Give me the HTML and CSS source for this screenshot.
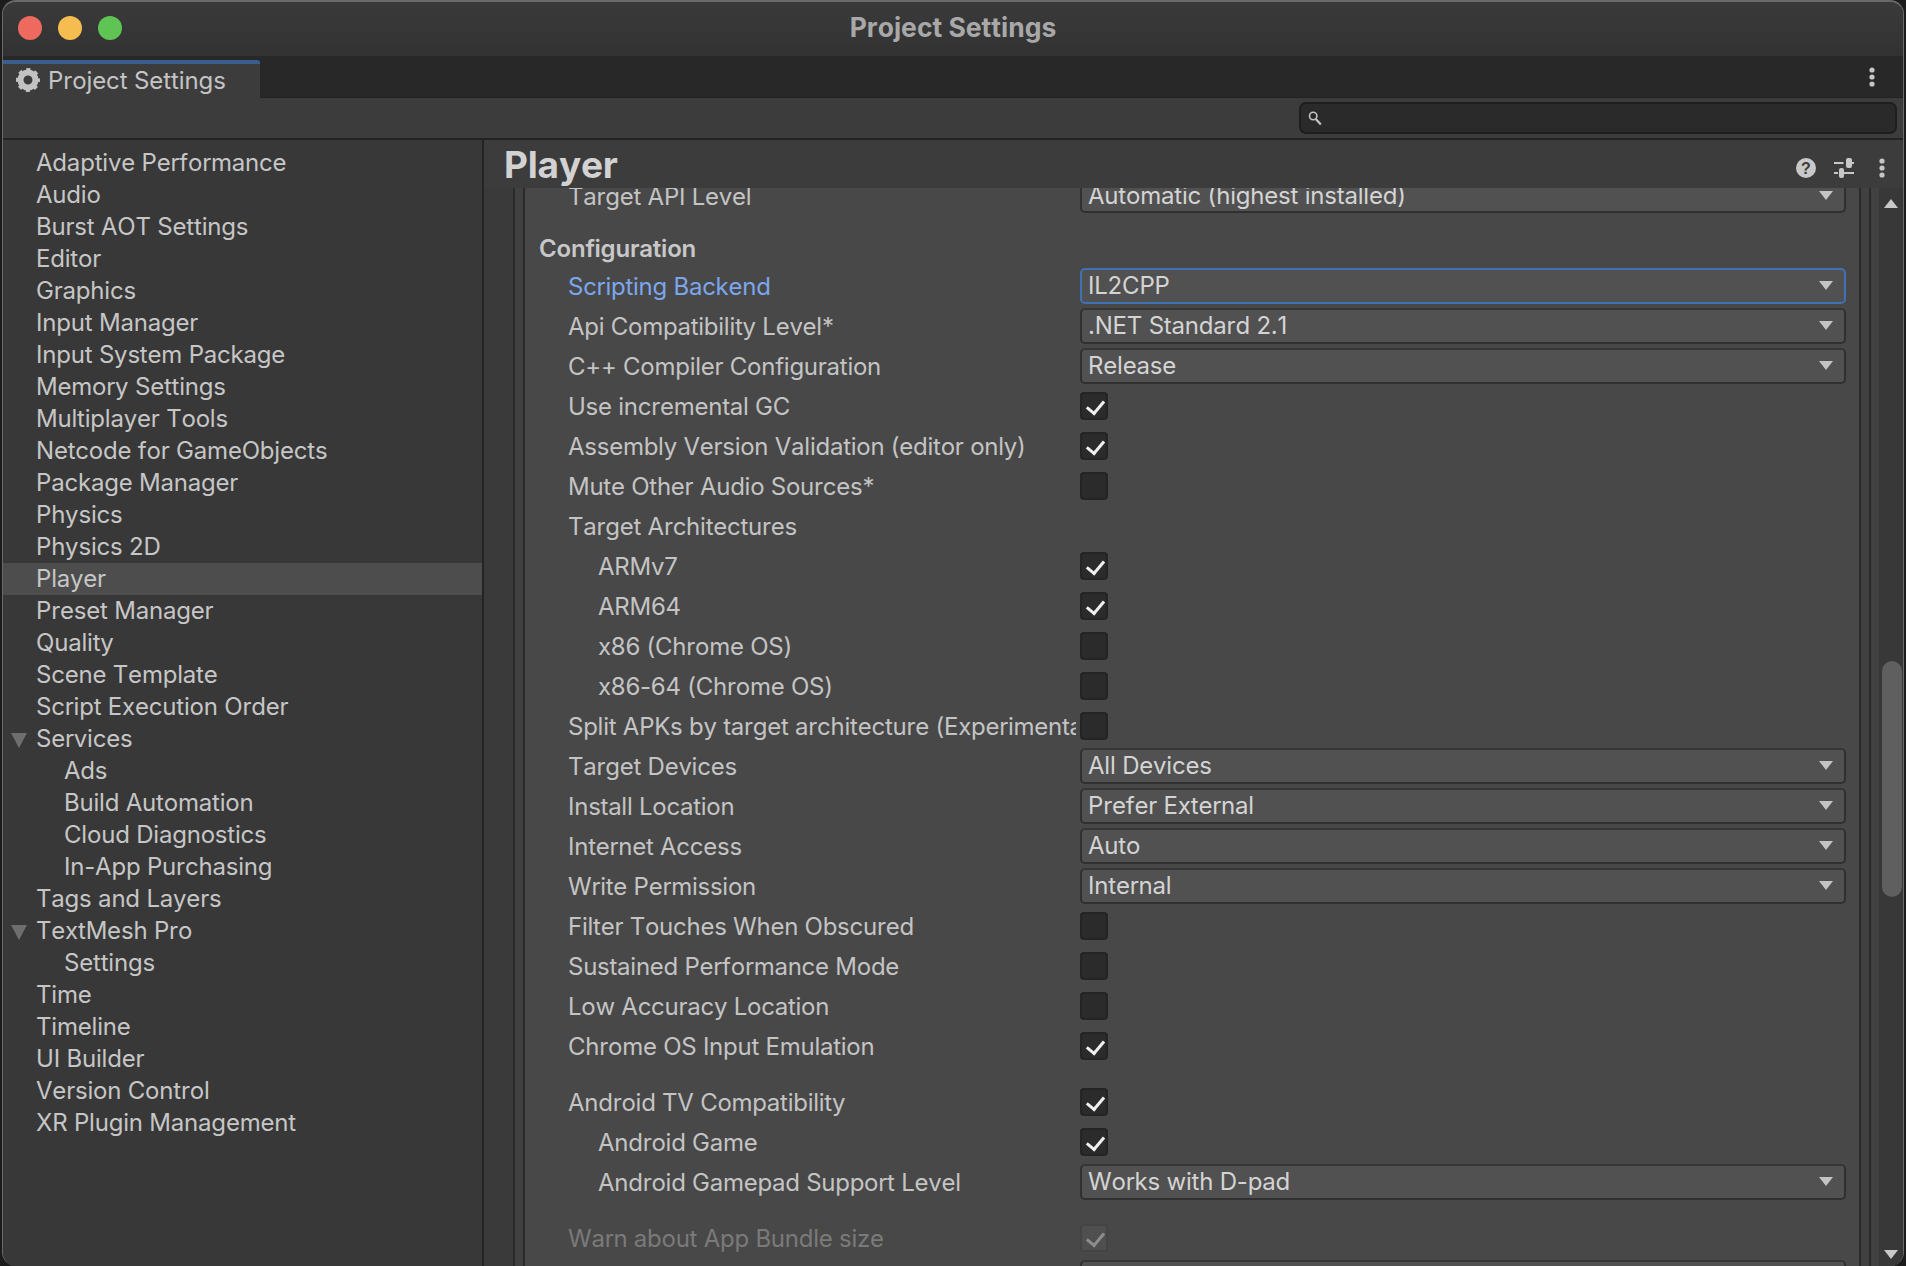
FILE: index.html
```html
<!DOCTYPE html>
<html lang="en">
<head>
<meta charset="utf-8">
<title>Project Settings</title>
<link rel="stylesheet" href="styles.css">
</head>
<body>
<div class="window">
  <header class="titlebar">
    <div class="lights"><span class="light red"></span><span class="light yellow"></span><span class="light green"></span></div>
    <div class="title">Project Settings</div>
  </header>
  <div class="tabbar">
    <div class="tab">
      <svg class="gear" viewBox="0 0 24 24"><circle cx="12" cy="12" r="7.500" fill="none" stroke="#c2c2c2" stroke-width="6"/><circle cx="12" cy="12" r="10.300" fill="none" stroke="#c2c2c2" stroke-width="3.400" stroke-dasharray="4 4.090" stroke-dashoffset="2"/></svg>
      <span>Project Settings</span>
    </div>
    <svg class="kebab" viewBox="0 0 6 20"><circle cx="3" cy="3" r="2.600"/><circle cx="3" cy="10" r="2.600"/><circle cx="3" cy="17" r="2.600"/></svg>
  </div>
  <div class="toolbar">
    <div class="search">
      <svg class="search-icon" viewBox="0 0 14 14"><circle cx="5.200" cy="5" r="3.700" fill="none" stroke="#c4c4c4" stroke-width="1.600"/><path d="M7.800 8l5 5.500" stroke="#c4c4c4" stroke-width="2.200" fill="none"/></svg>
    </div>
  </div>
  <div class="body">
    <nav class="sidebar">
      <div class="item">Adaptive Performance</div>
      <div class="item">Audio</div>
      <div class="item">Burst AOT Settings</div>
      <div class="item">Editor</div>
      <div class="item">Graphics</div>
      <div class="item">Input Manager</div>
      <div class="item">Input System Package</div>
      <div class="item">Memory Settings</div>
      <div class="item">Multiplayer Tools</div>
      <div class="item">Netcode for GameObjects</div>
      <div class="item">Package Manager</div>
      <div class="item">Physics</div>
      <div class="item">Physics 2D</div>
      <div class="item selected">Player</div>
      <div class="item">Preset Manager</div>
      <div class="item">Quality</div>
      <div class="item">Scene Template</div>
      <div class="item">Script Execution Order</div>
      <div class="item parent"><span class="fold"></span>Services</div>
      <div class="item child">Ads</div>
      <div class="item child">Build Automation</div>
      <div class="item child">Cloud Diagnostics</div>
      <div class="item child">In-App Purchasing</div>
      <div class="item">Tags and Layers</div>
      <div class="item parent"><span class="fold"></span>TextMesh Pro</div>
      <div class="item child">Settings</div>
      <div class="item">Time</div>
      <div class="item">Timeline</div>
      <div class="item">UI Builder</div>
      <div class="item">Version Control</div>
      <div class="item">XR Plugin Management</div>
    </nav>
    <main class="panel">
      <div class="panel-head">
        <h1 class="panel-title">Player</h1>
        <div class="panel-tools">
          <svg class="tool-help" viewBox="0 0 20 20"><circle cx="10" cy="10" r="10" fill="#c8c8c8"/><text x="10" y="15.500" class="help-mark">?</text></svg>
          <svg class="tool-sliders" viewBox="0 0 20 20"><path d="M0 5h9.500M18 5h2M0 15h4M10 15h10" stroke="#c8c8c8" stroke-width="2" fill="none"/><rect x="12" y="0" width="6" height="10" rx="2" fill="#c8c8c8"/><rect x="5" y="10" width="5" height="10" rx="2" fill="#c8c8c8"/></svg>
          <svg class="kebab tool-kebab" viewBox="0 0 6 20"><circle cx="3" cy="3" r="2.600"/><circle cx="3" cy="10" r="2.600"/><circle cx="3" cy="17" r="2.600"/></svg>
        </div>
      </div>
      <div class="panel-body">
        <div class="gutter-outer"></div>
        <div class="gutter-inner"></div>
        <div class="inspector">
          <div class="clip-row">
            <div class="row"><label class="lbl">Target API Level</label><div class="select"><span>Automatic (highest installed)</span><i class="caret"></i></div></div>
          </div>
          <div class="section">Configuration</div>
          <div class="row"><label class="lbl focus">Scripting Backend</label><div class="select focused"><span>IL2CPP</span><i class="caret"></i></div></div>
          <div class="row"><label class="lbl">Api Compatibility Level*</label><div class="select"><span>.NET Standard 2.1</span><i class="caret"></i></div></div>
          <div class="row"><label class="lbl">C++ Compiler Configuration</label><div class="select"><span>Release</span><i class="caret"></i></div></div>
          <div class="row"><label class="lbl">Use incremental GC</label><div class="check on"></div></div>
          <div class="row"><label class="lbl">Assembly Version Validation (editor only)</label><div class="check on"></div></div>
          <div class="row"><label class="lbl">Mute Other Audio Sources*</label><div class="check"></div></div>
          <div class="row"><label class="lbl">Target Architectures</label></div>
          <div class="row"><label class="lbl sub">ARMv7</label><div class="check on"></div></div>
          <div class="row"><label class="lbl sub">ARM64</label><div class="check on"></div></div>
          <div class="row"><label class="lbl sub">x86 (Chrome OS)</label><div class="check"></div></div>
          <div class="row"><label class="lbl sub">x86-64 (Chrome OS)</label><div class="check"></div></div>
          <div class="row"><label class="lbl">Split APKs by target architecture (Experimental)</label><div class="check"></div></div>
          <div class="row"><label class="lbl">Target Devices</label><div class="select"><span>All Devices</span><i class="caret"></i></div></div>
          <div class="row"><label class="lbl">Install Location</label><div class="select"><span>Prefer External</span><i class="caret"></i></div></div>
          <div class="row"><label class="lbl">Internet Access</label><div class="select"><span>Auto</span><i class="caret"></i></div></div>
          <div class="row"><label class="lbl">Write Permission</label><div class="select"><span>Internal</span><i class="caret"></i></div></div>
          <div class="row"><label class="lbl">Filter Touches When Obscured</label><div class="check"></div></div>
          <div class="row"><label class="lbl">Sustained Performance Mode</label><div class="check"></div></div>
          <div class="row"><label class="lbl">Low Accuracy Location</label><div class="check"></div></div>
          <div class="row"><label class="lbl">Chrome OS Input Emulation</label><div class="check on"></div></div>
          <div class="row gap"><label class="lbl">Android TV Compatibility</label><div class="check on"></div></div>
          <div class="row"><label class="lbl sub">Android Game</label><div class="check on"></div></div>
          <div class="row"><label class="lbl sub">Android Gamepad Support Level</label><div class="select"><span>Works with D-pad</span><i class="caret"></i></div></div>
          <div class="row gap"><label class="lbl dim">Warn about App Bundle size</label><div class="check on dimmed"></div></div>
          <div class="row"><label class="lbl"></label><div class="select"></div></div>
        </div>
        <div class="gutter-right"></div>
        <div class="gutter-right"></div>
        <div class="scrollbar">
          <i class="arrow up"></i>
          <div class="track"><div class="thumb"></div></div>
          <i class="arrow down"></i>
        </div>
      </div>
    </main>
  </div>
</div>
</body>
</html>
```
FILE: styles.css
```css
* { box-sizing: border-box; }
html, body { margin: 0; height: 100%; background: #1c1c1c; overflow: hidden; }
body { font-family: Inter, "Liberation Sans", sans-serif; font-kerning: none; color: #c6c6c6; padding: 0 2px; }
.window { width: 1902px; height: 1266px; display: flex; flex-direction: column; background: #383838; border-radius: 14px; overflow: hidden; border: 1px solid #6a6a6a; border-top-width: 2px; border-bottom: 0; }
.titlebar { height: 54px; flex: none; display: flex; align-items: center; position: relative; background: linear-gradient(#3a3a3a, #323232); padding-bottom: 2px; }
.lights { display: flex; gap: 16px; padding-left: 15px; }
.light { width: 24px; height: 24px; border-radius: 50%; }
.red { background: #ee6a5f; }
.yellow { background: #f5bd4f; }
.green { background: #5fc454; }
.title { position: absolute; left: 0; right: 0; top: 0; bottom: 4px; display: flex; align-items: center; justify-content: center; font-size: 26.500px; font-weight: 700; color: #a8a8a8; }
.tabbar { height: 42px; flex: none; display: flex; justify-content: space-between; align-items: flex-end; background: #282828; padding-right: 28px; border-bottom: 1px solid #232323; }
.kebab { width: 6px; height: 20px; fill: #c6c6c6; align-self: center; }
.tab { width: 257px; height: 38px; margin-bottom: -1px; background: #3c3c3c; border-top: 4px solid #3a5f8e; border-top-right-radius: 3px; display: flex; align-items: center; gap: 8px; padding-left: 13px; padding-bottom: 2px; font-size: 24px; letter-spacing: -.1px; color: #c4c4c4; }
.gear { width: 24px; height: 24px; flex: none; }
.toolbar { height: 42px; flex: none; display: flex; justify-content: flex-end; align-items: center; background: #3c3c3c; border-bottom: 2px solid #232323; padding-right: 6px; }
.search { width: 598px; height: 32px; background: #2a2a2a; border: 2px solid #1e1e1e; border-radius: 7px; display: flex; align-items: center; padding-left: 7px; }
.search-icon { width: 14px; height: 14px; }
.body { flex: 1; min-height: 0; display: flex; }
.sidebar { width: 481px; flex: none; padding-top: 7px; background: #383838; border-right: 2px solid #242424; }
.item { height: 32px; line-height: 32px; padding-left: 33px; font-size: 24px; letter-spacing: -.2px; color: #c6c6c6; position: relative; white-space: nowrap; }
.item.selected { background: #4d4d4d; }
.item.child { padding-left: 61px; }
.fold { position: absolute; left: 8px; top: 10px; width: 0; height: 0; border-left: 8.500px solid transparent; border-right: 8.500px solid transparent; border-top: 15px solid #6e6e6e; }
.panel { flex: 1; min-width: 0; display: flex; flex-direction: column; background: #484848; }
.panel-head { height: 48px; flex: none; background: #3c3c3c; display: flex; justify-content: space-between; padding: 0 18px 0 20px; }
.panel-title { margin: 0; padding-top: 1px; font-size: 37px; font-weight: 700; letter-spacing: -.2px; color: #d2d2d2; line-height: 48px; }
.panel-tools { display: flex; align-items: center; gap: 18px; padding-top: 8px; }
.tool-kebab { margin-left: 7px; }
.tool-help { width: 20px; height: 20px; }
.help-mark { font-family: "Liberation Sans", sans-serif; font-size: 16px; font-weight: 700; fill: #3c3c3c; text-anchor: middle; }
.tool-sliders { width: 20px; height: 20px; }
.panel-body { flex: 1; min-height: 0; display: flex; overflow: hidden; }
.gutter-outer { width: 31px; flex: none; background: #3a3a3a; border-right: 2px solid #2a2a2a; }
.gutter-inner { width: 8px; flex: none; background: #414141; }
.inspector { flex: none; width: 1336px; border-left: 2px solid #2a2a2a; background: #484848; }
.gutter-right { width: 10px; flex: none; background: #414141; border-left: 2px solid #2a2a2a; }
.clip-row { margin-top: -13px; }
.clip-row .lbl { padding-top: 3px; }
.clip-row .select { padding-top: 2px; }
.row { height: 40px; display: flex; align-items: center; padding-left: 43px; }
.row.gap { margin-top: 16px; }
.section { height: 34px; margin-top: 17px; padding-left: 14px; line-height: 34px; font-size: 24px; font-weight: 600; letter-spacing: -.2px; color: #c8c8c8; }
.lbl { width: 508px; margin-right: 4px; flex: none; font-size: 24px; color: #c4c4c4; white-space: nowrap; overflow: hidden; letter-spacing: -.25px; }
.lbl.sub { padding-left: 30px; }
.lbl.focus { color: #7ca6ec; }
.lbl.dim { color: #7a7a7a; }
.select { width: 766px; height: 36px; flex: none; background: #515151; border: 2px solid #303030; border-top-color: #363636; border-radius: 5px; display: flex; align-items: center; justify-content: space-between; padding: 0 11px 1px 6px; font-size: 24px; color: #d4d4d4; letter-spacing: -.2px; }
.select.focused { border-color: #3f71b4; }
.caret { width: 0; height: 0; margin-left: auto; border-left: 7px solid transparent; border-right: 7px solid transparent; border-top: 9px solid #c4c4c4; }
.check { width: 28px; height: 28px; background: #2b2b2b; border: 2px solid #242424; border-radius: 4px; position: relative; }
.check.on::after { content: ""; position: absolute; left: 8px; top: 3px; width: 8px; height: 14px; border: solid #f0f0f0; border-width: 0 3px 3px 0; transform: rotate(40deg); }
.check.dimmed { background: #4f4f4f; border-color: #444; }
.check.dimmed::after { border-color: #8d8d8d; }
.scrollbar { width: 24px; flex: none; display: flex; flex-direction: column; align-items: center; background: #383838; }
.arrow { flex: none; width: 0; height: 0; border-left: 7px solid transparent; border-right: 7px solid transparent; }
.arrow.up { border-bottom: 9px solid #c8c8c8; margin-top: 11px; }
.arrow.down { border-top: 9px solid #c8c8c8; margin-bottom: 7px; }
.track { flex: 1; width: 100%; position: relative; }
.thumb { position: absolute; right: 1px; top: 453px; width: 20px; height: 236px; background: #5f5f5f; border-radius: 10px; }
```
